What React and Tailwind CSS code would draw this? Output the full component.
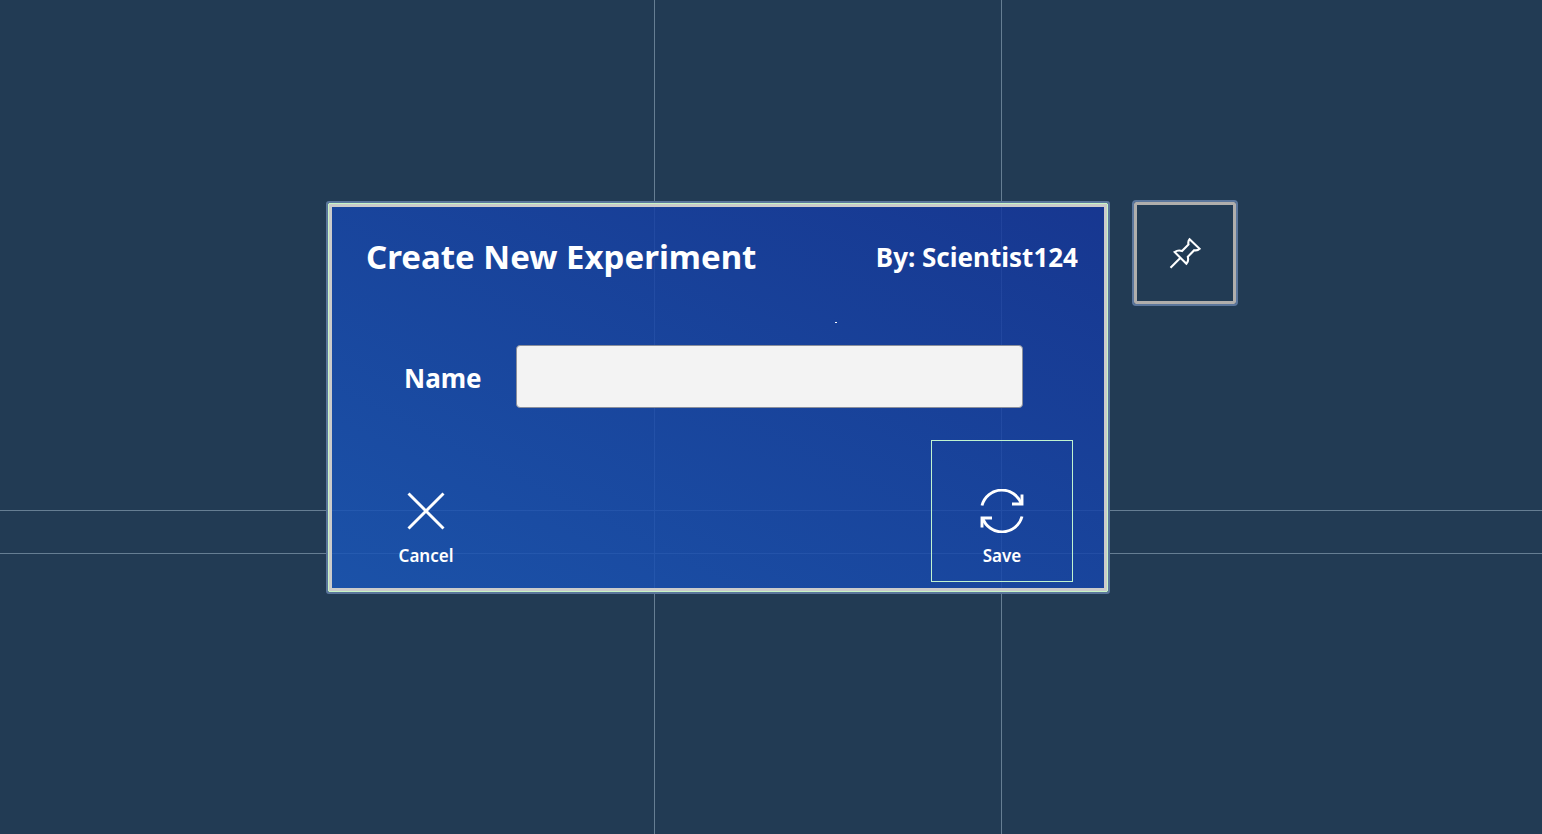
import React from "react";

const GUIDE = "absolute bg-[#667e93]";

function CloseIcon() {
  return (
    <svg viewBox="0 0 44 44" className="size-11" fill="none" stroke="white" strokeWidth="2.9" aria-hidden="true">
      <path d="M4.5 4.5 39.5 39.5M39.5 4.5 4.5 39.5" />
    </svg>
  );
}

function SyncIcon() {
  return (
    <svg viewBox="0 0 44 44" className="size-11" fill="none" stroke="white" strokeWidth="2.9" aria-hidden="true">
      <path d="M2 16.5A20.6 20.6 0 0 1 41.4 15M42 27.5A20.6 20.6 0 0 1 2.6 29" />
      <path d="M42 5.5V15H32M2 38.5V29H12" />
    </svg>
  );
}

function PinIcon() {
  return (
    <svg viewBox="0 0 32 32" className="size-8" fill="none" stroke="white" strokeWidth="2.1" aria-hidden="true">
      <path d="M20.6 2.2 30.6 11.8C29 13.4 27 13.6 25.2 13.2L18.8 19.8C19.4 22.2 19.2 25 17.4 26.8L5.6 15C8 13.4 11 13.4 13 14L19.5 7.4C19 5.4 19.4 3.6 20.6 2.2ZM11.5 20.8 1.5 30.8" />
    </svg>
  );
}

export default function App() {
  return (
    <main className="relative isolate flex min-h-screen items-start justify-center gap-[26px] overflow-hidden bg-[#223b54] pt-[202px] pl-[22px] font-['Noto_Sans','Open_Sans',sans-serif] text-white">
      <div className={`${GUIDE} inset-y-0 left-[654px] -z-10 w-px`} />
      <div className={`${GUIDE} inset-y-0 left-[1001px] -z-10 w-px`} />
      <div className={`${GUIDE} inset-x-0 top-[510px] -z-10 h-px`} />
      <div className={`${GUIDE} inset-x-0 top-[553px] -z-10 h-px`} />

      <form
        onSubmit={(e) => e.preventDefault()}
        className="mt-px w-full max-w-[780px] rounded-[1px] border border-[#c8f5c6] outline-2 outline-[#5b769c]"
      >
        <div className="relative border-[3px] border-[#cbcbcb] bg-linear-to-tr from-[#1a56b7]/85 to-[#15369b]/85 bg-clip-padding pr-[26px] pb-[6px] pl-[23px]">
          <header className="flex items-center justify-between gap-6 pt-[27px] pl-[11px]">
            <h1 className="text-[33px] leading-[46px] font-bold">Create New Experiment</h1>
            <p className="text-[26px] leading-[44px] font-bold">By: Scientist124</p>
          </header>

          <span className="absolute top-[115px] left-[503px] h-px w-[2px] bg-white" />

          <div className="mt-[65px] flex items-center gap-[34px] pr-[55px] pl-[49px]">
            <label htmlFor="name" className="pt-[2px] text-[26px] leading-9 font-bold">
              Name
            </label>
            <input
              id="name"
              type="text"
              className="h-[63px] min-w-0 flex-1 rounded-[4px] border border-[#8a8f9c] bg-[#f3f3f3] px-4 text-2xl text-black outline-none"
            />
          </div>

          <div className="mt-8 flex justify-between pr-[5px]">
            <button
              type="button"
              className="flex size-[142px] flex-col items-center justify-end gap-[11px] border border-transparent pb-[13px]"
            >
              <CloseIcon />
              <span className="text-[17px] leading-6 font-semibold">Cancel</span>
            </button>
            <button
              type="submit"
              className="flex size-[142px] flex-col items-center justify-end gap-[11px] border border-[#c0f3d0] pb-[13px]"
            >
              <SyncIcon />
              <span className="text-[17px] leading-6 font-semibold">Save</span>
            </button>
          </div>
        </div>
      </form>

      <button
        type="button"
        aria-label="Pin"
        className="flex size-[102px] shrink-0 items-center justify-center rounded-[2px] border-[3px] border-[#b0aeac] bg-[#223b54] outline-2 outline-[#5b769c]"
      >
        <PinIcon />
      </button>
    </main>
  );
}
